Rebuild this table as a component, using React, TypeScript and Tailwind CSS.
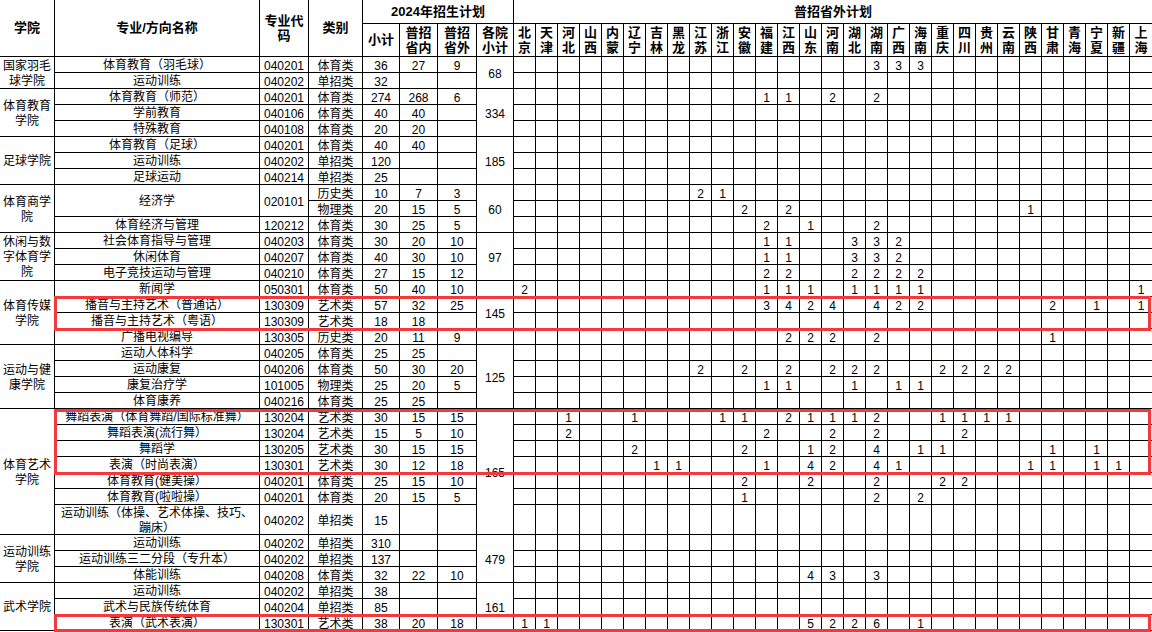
import React from "react";
import clsx from "clsx";

const provinces = [
  "北京", "天津", "河北", "山西", "内蒙", "辽宁", "吉林", "黑龙", "江苏", "浙江",
  "安徽", "福建", "江西", "山东", "河南", "湖北", "湖南", "广西", "海南", "重庆",
  "四川", "贵州", "云南", "陕西", "甘肃", "青海", "宁夏", "新疆", "上海",
];

type Row = {
  college?: [string, number];
  major?: string;
  majorSpan?: number;
  code?: string;
  type: string;
  n: [string, string, string];
  sum?: [string, number];
  p: Record<string, number>;
};

const rows: Row[] = [
  { college: ["国家羽毛球学院", 2], major: "体育教育（羽毛球）", code: "040201", type: "体育类", n: ["36", "27", "9"], sum: ["68", 2], p: { 湖南: 3, 广西: 3, 海南: 3 } },
  { major: "运动训练", code: "040202", type: "单招类", n: ["32", "", ""], p: {} },
  { college: ["体育教育学院", 3], major: "体育教育（师范）", code: "040201", type: "体育类", n: ["274", "268", "6"], sum: ["334", 3], p: { 福建: 1, 江西: 1, 河南: 2, 湖南: 2 } },
  { major: "学前教育", code: "040106", type: "体育类", n: ["40", "40", ""], p: {} },
  { major: "特殊教育", code: "040108", type: "体育类", n: ["20", "20", ""], p: {} },
  { college: ["足球学院", 3], major: "体育教育（足球）", code: "040201", type: "体育类", n: ["40", "40", ""], sum: ["185", 3], p: {} },
  { major: "运动训练", code: "040202", type: "单招类", n: ["120", "", ""], p: {} },
  { major: "足球运动", code: "040214", type: "单招类", n: ["25", "", ""], p: {} },
  { college: ["体育商学院", 3], major: "经济学", majorSpan: 2, code: "020101", type: "历史类", n: ["10", "7", "3"], sum: ["60", 3], p: { 江苏: 2, 浙江: 1 } },
  { type: "物理类", n: ["20", "15", "5"], p: { 安徽: 2, 江西: 2, 陕西: 1 } },
  { major: "体育经济与管理", code: "120212", type: "体育类", n: ["30", "25", "5"], p: { 福建: 2, 山东: 1, 湖南: 2 } },
  { college: ["休闲与数字体育学院", 3], major: "社会体育指导与管理", code: "040203", type: "体育类", n: ["30", "20", "10"], sum: ["97", 3], p: { 福建: 1, 江西: 1, 湖北: 3, 湖南: 3, 广西: 2 } },
  { major: "休闲体育", code: "040207", type: "体育类", n: ["40", "30", "10"], p: { 福建: 1, 江西: 1, 湖北: 3, 湖南: 3, 广西: 2 } },
  { major: "电子竞技运动与管理", code: "040210", type: "体育类", n: ["27", "15", "12"], p: { 福建: 2, 江西: 2, 湖北: 2, 湖南: 2, 广西: 2, 海南: 2 } },
  { college: ["体育传媒学院", 4], major: "新闻学", code: "050301", type: "体育类", n: ["50", "40", "10"], sum: ["145", 4], p: { 北京: 2, 福建: 1, 江西: 1, 山东: 1, 湖北: 1, 湖南: 1, 广西: 1, 海南: 1, 上海: 1 } },
  { major: "播音与主持艺术（普通话）", code: "130309", type: "艺术类", n: ["57", "32", "25"], p: { 福建: 3, 江西: 4, 山东: 2, 河南: 4, 湖南: 4, 广西: 2, 海南: 2, 甘肃: 2, 宁夏: 1, 上海: 1 } },
  { major: "播音与主持艺术（粤语）", code: "130309", type: "艺术类", n: ["18", "18", ""], p: {} },
  { major: "广播电视编导", code: "130305", type: "历史类", n: ["20", "11", "9"], p: { 江西: 2, 山东: 2, 河南: 2, 湖南: 2, 甘肃: 1 } },
  { college: ["运动与健康学院", 4], major: "运动人体科学", code: "040205", type: "体育类", n: ["25", "25", ""], sum: ["125", 4], p: {} },
  { major: "运动康复", code: "040206", type: "体育类", n: ["50", "30", "20"], p: { 江苏: 2, 安徽: 2, 江西: 2, 河南: 2, 湖北: 2, 湖南: 2, 重庆: 2, 四川: 2, 贵州: 2, 云南: 2 } },
  { major: "康复治疗学", code: "101005", type: "物理类", n: ["25", "20", "5"], p: { 福建: 1, 江西: 1, 湖北: 1, 广西: 1, 海南: 1 } },
  { major: "体育康养", code: "040216", type: "体育类", n: ["25", "25", ""], p: {} },
  { college: ["体育艺术学院", 7], major: "舞蹈表演（体育舞蹈/国际标准舞）", code: "130204", type: "艺术类", n: ["30", "15", "15"], sum: ["165", 7], p: { 河北: 1, 辽宁: 1, 浙江: 1, 安徽: 1, 江西: 2, 山东: 1, 河南: 1, 湖北: 1, 湖南: 2, 重庆: 1, 四川: 1, 贵州: 1, 云南: 1 } },
  { major: "舞蹈表演(流行舞）", code: "130204", type: "艺术类", n: ["15", "5", "10"], p: { 河北: 2, 福建: 2, 河南: 2, 湖南: 2, 四川: 2 } },
  { major: "舞蹈学", code: "130205", type: "艺术类", n: ["30", "15", "15"], p: { 辽宁: 2, 安徽: 2, 山东: 1, 河南: 2, 湖南: 4, 海南: 1, 重庆: 1, 甘肃: 1, 宁夏: 1 } },
  { major: "表演（时尚表演）", code: "130301", type: "艺术类", n: ["30", "12", "18"], p: { 吉林: 1, 黑龙: 1, 福建: 1, 山东: 4, 河南: 2, 湖南: 4, 广西: 1, 陕西: 1, 甘肃: 1, 宁夏: 1, 新疆: 1 } },
  { major: "体育教育(健美操）", code: "040201", type: "体育类", n: ["25", "15", "10"], p: { 安徽: 2, 山东: 2, 湖南: 2, 重庆: 2, 四川: 2 } },
  { major: "体育教育(啦啦操）", code: "040201", type: "体育类", n: ["20", "15", "5"], p: { 安徽: 1, 湖南: 2, 海南: 2 } },
  { major: "运动训练（体操、艺术体操、技巧、蹦床）", code: "040202", type: "单招类", n: ["15", "", ""], p: {} },
  { college: ["运动训练学院", 3], major: "运动训练", code: "040202", type: "单招类", n: ["310", "", ""], sum: ["479", 3], p: {} },
  { major: "运动训练三二分段（专升本）", code: "040202", type: "单招类", n: ["137", "", ""], p: {} },
  { major: "体能训练", code: "040208", type: "体育类", n: ["32", "22", "10"], p: { 山东: 4, 河南: 3, 湖南: 3 } },
  { college: ["武术学院", 3], major: "运动训练", code: "040202", type: "单招类", n: ["38", "", ""], sum: ["161", 3], p: {} },
  { major: "武术与民族传统体育", code: "040204", type: "单招类", n: ["85", "", ""], p: {} },
  { major: "表演（武术表演）", code: "130301", type: "艺术类", n: ["38", "20", "18"], p: { 北京: 1, 天津: 1, 山东: 5, 河南: 2, 湖北: 2, 湖南: 6, 海南: 1 } },
];

const rowSpan: Record<number, string> = {
  1: "",
  2: "row-span-2",
  3: "row-span-3",
  4: "row-span-4",
  7: "row-span-7",
};

const Cell = ({
  className,
  last,
  children,
}: {
  className?: string;
  last?: boolean;
  children?: React.ReactNode;
}) => (
  <div
    className={clsx(
      "flex items-center justify-center text-center border-b border-black",
      !last && "border-r",
      className
    )}
  >
    {children}
  </div>
);

// red highlight frames drawn over the table
const Frame = ({ className }: { className: string }) => (
  <div className={clsx("absolute pointer-events-none border-[3px] border-[#f23a3c]", className)} />
);

export default function App() {
  return (
    <div className="relative w-[1152px] h-[632px] overflow-hidden bg-white text-black font-['Liberation_Sans','Noto_Sans_CJK_SC',sans-serif]">
      <div className="grid grid-cols-[55px_205px_49px_54px_37px_38px_39px_37px_repeat(29,22px)] grid-rows-[24px_33px_repeat(28,16px)_30px_repeat(6,16px)]">
        {/* header */}
        <Cell className="row-span-2 text-[13px] font-bold">学院</Cell>
        <Cell className="row-span-2 text-[13px] font-bold">专业/方向名称</Cell>
        <Cell className="row-span-2 text-[13px] font-bold leading-[15px] px-[2px]">专业代码</Cell>
        <Cell className="row-span-2 text-[13px] font-bold">类别</Cell>
        <Cell className="col-span-4 text-[13px] font-bold">2024年招生计划</Cell>
        <Cell last className="col-span-29 text-[13px] font-bold">普招省外计划</Cell>
        <Cell className="text-[13px] font-bold">小计</Cell>
        <Cell className="text-[13px] font-bold leading-[15px]">普招省内</Cell>
        <Cell className="text-[13px] font-bold leading-[15px]">普招省外</Cell>
        <Cell className="text-[13px] font-bold leading-[15px]">各院小计</Cell>
        {provinces.map((p, i) => (
          <Cell key={p} last={i === provinces.length - 1} className="text-[13px] font-bold leading-[15px]">
            {p}
          </Cell>
        ))}

        {/* body */}
        {rows.map((r, ri) => (
          <React.Fragment key={ri}>
            {r.college && (
              <Cell className={clsx(rowSpan[r.college[1]], "text-[12px] leading-[15px] px-[2px] pt-[2px]")}>
                {r.college[0]}
              </Cell>
            )}
            {r.major && (
              <Cell className={clsx(rowSpan[r.majorSpan ?? 1], "text-[12px] leading-[15px] px-[4px] pt-[2px]")}>
                {r.major}
              </Cell>
            )}
            {r.code && (
              <Cell className={clsx(rowSpan[r.majorSpan ?? 1], "text-[12px] pt-[2px]")}>{r.code}</Cell>
            )}
            <Cell className="text-[12px] pt-[2px]">{r.type}</Cell>
            {r.n.map((v, i) => (
              <Cell key={i} className="text-[12px] pt-[2px]">
                {v}
              </Cell>
            ))}
            {r.sum && <Cell className={clsx(rowSpan[r.sum[1]], "text-[12px] pt-[2px]")}>{r.sum[0]}</Cell>}
            {provinces.map((p, i) => (
              <Cell key={p} last={i === provinces.length - 1} className="text-[12px] pt-[2px]">
                {r.p[p] ?? ""}
              </Cell>
            ))}
          </React.Fragment>
        ))}
      </div>

      <Frame className="left-[54px] top-[296px] w-[1097px] h-[35px]" />
      <Frame className="left-[54px] top-[409px] w-[1097px] h-[66px]" />
      <Frame className="left-[54px] top-[614px] w-[1097px] h-[18px]" />
    </div>
  );
}
